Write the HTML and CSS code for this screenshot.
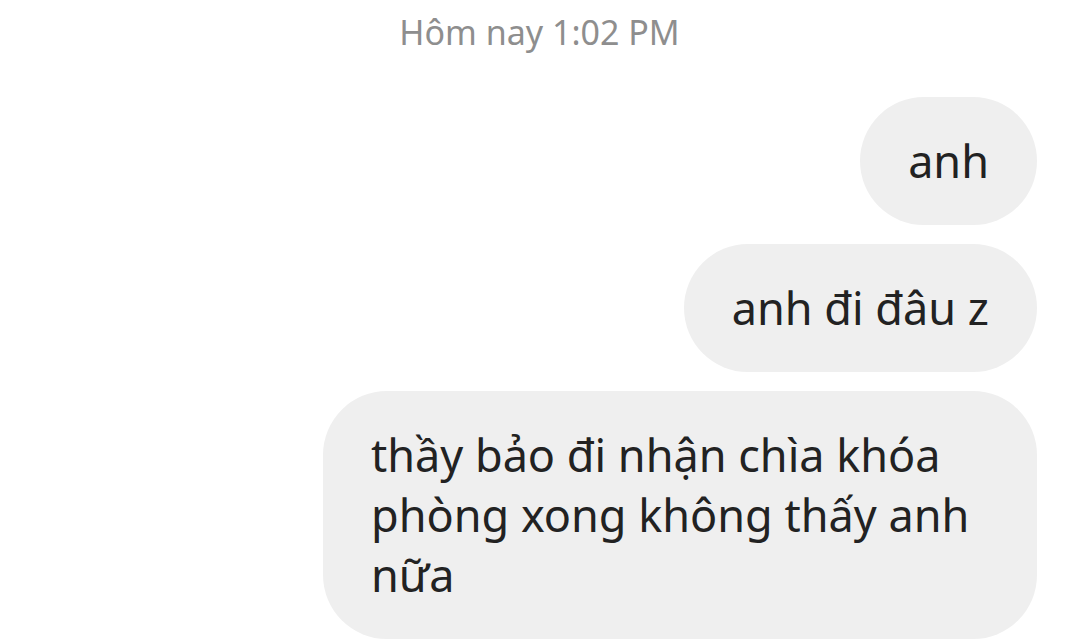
FILE: index.html
```html
<!DOCTYPE html>
<html lang="vi">

<head>
  <meta charset="UTF-8">
  <meta name="viewport" content="width=device-width, initial-scale=1.0">
  <title>Tin nhắn</title>
  <link rel="stylesheet" href="styles.css">
</head>

<body>
  <div class="thread">
    <div class="timestamp">Hôm nay 1:02 PM</div>

    <div class="messages">
      <div class="bubble">anh</div>
      <div class="bubble">anh đi đâu z</div>
      <div class="bubble">thầy bảo đi nhận chìa khóa phòng xong không thấy anh nữa</div>
    </div>
  </div>
</body>

</html>
```

FILE: styles.css
```css
body {
  margin: 0;
  background: #fff;
  font-family: "Noto Sans", "Open Sans", sans-serif;
  overflow: hidden;
}

.thread {
  display: flex;
  flex-direction: column;
}

.timestamp {
  text-align: center;
  color: #8e8e8e;
  font-size: 34px;
  line-height: 40px;
  padding-top: 12px;
}

.messages {
  display: flex;
  flex-direction: column;
  align-items: flex-end;
  gap: 19px;
  padding: 45px 42px 0 0;
}

.bubble {
  box-sizing: border-box;
  max-width: 714px;
  padding: 34px 48px;
  background: #efefef;
  color: #222;
  font-size: 45px;
  line-height: 60px;
  border-radius: 64px;
}
```
